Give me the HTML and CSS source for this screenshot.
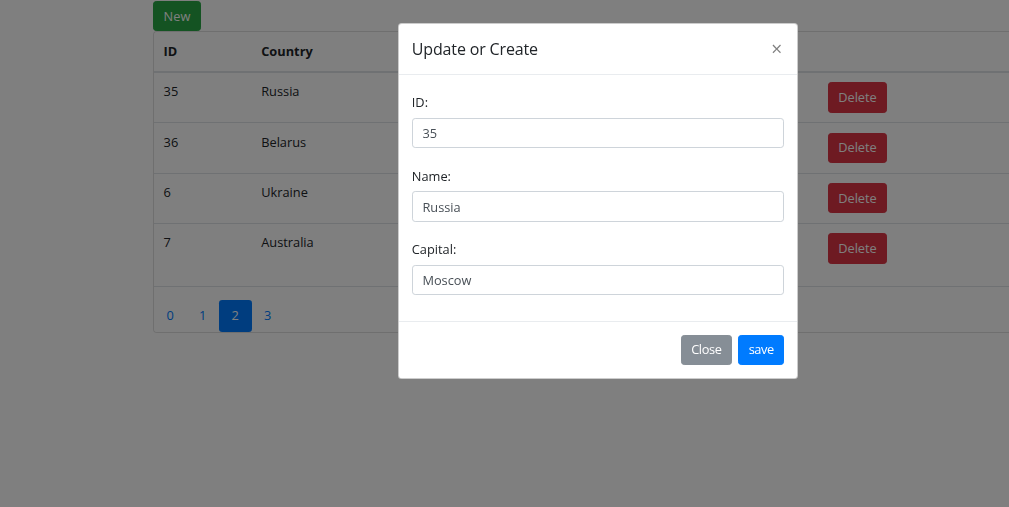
FILE: index.html
```html
<!DOCTYPE html>
<html lang="en">
<head>
<meta charset="utf-8">
<title>Countries</title>
<link rel="stylesheet" href="styles.css">
</head>
<body>
<div class="page">
  <button class="btn btn-success">New</button>
  <div class="card">
    <table class="table">
      <colgroup>
        <col class="c-id"><col class="c-country"><col class="c-capital"><col class="c-edit"><col class="c-del"><col>
      </colgroup>
      <thead>
        <tr><th>ID</th><th>Country</th><th></th><th></th><th></th><th></th></tr>
      </thead>
      <tbody>
        <tr><td>35</td><td>Russia</td><td></td><td></td><td><button class="btn btn-danger">Delete</button></td><td></td></tr>
        <tr><td>36</td><td>Belarus</td><td></td><td></td><td><button class="btn btn-danger">Delete</button></td><td></td></tr>
        <tr><td>6</td><td>Ukraine</td><td></td><td></td><td><button class="btn btn-danger">Delete</button></td><td></td></tr>
        <tr><td>7</td><td>Australia</td><td></td><td></td><td><button class="btn btn-danger">Delete</button></td><td></td></tr>
      </tbody>
    </table>
    <div class="card-foot">
      <ul class="pagination">
        <li><a href="#">0</a></li>
        <li><a href="#">1</a></li>
        <li><a href="#" class="active">2</a></li>
        <li><a href="#">3</a></li>
      </ul>
    </div>
  </div>
</div>

<div class="backdrop"></div>

<div class="modal">
  <div class="modal-header">
    <h5 class="modal-title">Update or Create</h5>
    <span class="close">&times;</span>
  </div>
  <div class="modal-body">
    <div class="form-group">
      <label>ID:</label>
      <input class="form-control" type="text" value="35">
    </div>
    <div class="form-group">
      <label>Name:</label>
      <input class="form-control" type="text" value="Russia">
    </div>
    <div class="form-group">
      <label>Capital:</label>
      <input class="form-control" type="text" value="Moscow">
    </div>
  </div>
  <div class="modal-footer">
    <button class="btn btn-secondary">Close</button>
    <button class="btn btn-primary">save</button>
  </div>
</div>
</body>
</html>
```

FILE: styles.css
```css
html, body {
  margin: 0;
  padding: 0;
  overflow: hidden;
  height: 100%;
}
body {
  background: #fff;
  color: #212529;
  font-family: "Open Sans", "Noto Sans", sans-serif;
  font-size: 12.8px;
  line-height: 19.2px;
}
.page {
  padding: 1px 0 0 153px;
}
.btn {
  display: inline-block;
  box-sizing: border-box;
  height: 30.4px;
  font-family: inherit;
  font-size: 12.8px;
  line-height: 19.2px;
  padding: 4.6px 9.6px;
  border: 1px solid transparent;
  border-radius: 3.2px;
  color: #fff;
  cursor: pointer;
}
.btn-success { background: #28a745; border-color: #28a745; }
.btn-danger { background: #dc3545; border-color: #dc3545; }
.btn-secondary { background: #868e96; border-color: #868e96; }
.btn-primary { background: #007bff; border-color: #007bff; }

.card {
  width: 940px;
  border: 1px solid rgba(0,0,0,.125);
  border-radius: 3.2px;
}
.table {
  width: 100%;
  border-collapse: collapse;
  table-layout: fixed;
  margin-bottom: 12.8px;
}
.c-id { width: 97.6px; }
.c-country { width: 150px; }
.c-capital { width: 310px; }
.c-edit { width: 106.4px; }
.c-del { width: 100px; }
.table th, .table td {
  padding: 9.5px 9.6px;
  text-align: left;
  vertical-align: top;
  border-top: 1px solid #dee2e6;
}
.table thead th {
  padding: 9.6px;
  border-top: 0;
  border-bottom: 2px solid #dee2e6;
  font-weight: 700;
}
.table tbody tr:first-child td { border-top: 0; }
.card-foot {
  border-top: 1px solid #dee2e6;
  padding-top: 12.4px;
}
.pagination {
  display: flex;
  list-style: none;
  margin: 0;
  padding: 0;
}
.pagination a {
  display: flex;
  align-items: center;
  justify-content: center;
  width: 32.5px;
  height: 32px;
  color: #007bff;
  text-decoration: none;
  border-radius: 3.2px;
}
.pagination a.active {
  background: #007bff;
  color: #fff;
}

.backdrop {
  position: fixed;
  inset: 0;
  background: rgba(0,0,0,.5);
}
.modal {
  position: absolute;
  top: 23px;
  left: 398px;
  width: 400px;
  box-sizing: border-box;
  background: #fff;
  border: 1px solid rgba(0,0,0,.2);
  border-radius: 3.84px;
}
.modal-header {
  display: flex;
  justify-content: space-between;
  align-items: flex-start;
  padding: 12.8px;
  border-bottom: 1px solid #e9ecef;
}
.modal-title {
  margin: 0;
  font-size: 16px;
  line-height: 24px;
  font-weight: 500;
  letter-spacing: -0.15px;
}
.close {
  font-size: 19.2px;
  font-weight: 400;
  line-height: 24px;
  color: #000;
  opacity: .5;
  padding-right: 2px;
}
.modal-body {
  padding: 12.8px;
}
.form-group { margin-bottom: 12.8px; }
.form-group label {
  display: block;
  padding-top: 5.6px;
  margin-bottom: 5.6px;
}
.form-control {
  display: block;
  width: 100%;
  box-sizing: border-box;
  height: 30.4px;
  padding: 4.8px 9.6px;
  font-family: inherit;
  font-size: 12.8px;
  line-height: 19.2px;
  color: #495057;
  border: 1px solid #ced4da;
  border-radius: 3.2px;
  background: #fff;
}
.modal-footer {
  display: flex;
  justify-content: flex-end;
  gap: 6.4px;
  padding: 12.8px;
  border-top: 1px solid #e9ecef;
}
.modal-footer .btn {
  letter-spacing: -0.4px;
  padding: 4.6px 9.4px;
}
```
